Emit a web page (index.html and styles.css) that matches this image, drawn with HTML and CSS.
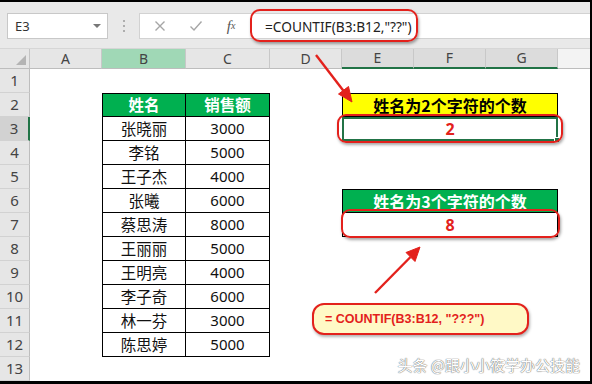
FILE: index.html
```html
<!DOCTYPE html>
<html lang="zh">
<head>
<meta charset="utf-8">
<title>COUNTIF</title>
<link rel="stylesheet" href="styles.css">
</head>
<body>
<div class="frame">
  <div class="toolbar">
    <div class="namebox"><span class="ref">E3</span><span class="caret"></span></div>
    <div class="grip">
      <svg width="4" height="14" viewBox="0 0 4 14"><circle cx="2" cy="2" r="1" fill="#9a9a9a"/><circle cx="2" cy="7" r="1" fill="#9a9a9a"/><circle cx="2" cy="12" r="1" fill="#9a9a9a"/></svg>
    </div>
    <div class="fbar">
      <div class="fbtns">
        <span class="fbtn"><svg width="12" height="12" viewBox="0 0 12 12"><path d="M1.5 1.5 L10.5 10.5 M10.5 1.5 L1.5 10.5" stroke="#a6a6a6" stroke-width="1.4" fill="none"/></svg></span>
        <span class="fbtn"><svg width="14" height="12" viewBox="0 0 14 12"><path d="M1.5 6.5 L5 10 L12.5 1.5" stroke="#a6a6a6" stroke-width="1.4" fill="none"/></svg></span>
        <span class="fbtn fx">f<sub>x</sub></span>
      </div>
      <div class="formula">=COUNTIF(B3:B12,"??")</div>
    </div>
  </div>

  <div class="sheet">
    <div class="corner"><span class="tri"></span></div>
    <div class="ch">A</div>
    <div class="ch chb">B</div>
    <div class="ch">C</div>
    <div class="ch">D</div>
    <div class="ch chs">E</div>
    <div class="ch chs">F</div>
    <div class="ch chs">G</div>
    <div class="ch chf"></div>

    <div class="rh">1</div><div class="c"></div><div class="c"></div><div class="c"></div><div class="c"></div><div class="rest"></div>

    <div class="rh">2</div><div class="c"></div>
    <div class="td th tl tt">姓名</div><div class="td th tt">销售额</div>
    <div class="c"></div><div class="box yel">姓名为2个字符的个数</div><div class="c"></div>

    <div class="rh rhs">3</div><div class="c"></div>
    <div class="td tl">张晓丽</div><div class="td num">3000</div>
    <div class="c"></div><div class="box res sel">2<span class="handle"></span></div><div class="c"></div>

    <div class="rh">4</div><div class="c"></div>
    <div class="td tl">李铭</div><div class="td num">5000</div>
    <div class="c"></div><div class="rest"></div>

    <div class="rh">5</div><div class="c"></div>
    <div class="td tl">王子杰</div><div class="td num">4000</div>
    <div class="c"></div><div class="rest"></div>

    <div class="rh">6</div><div class="c"></div>
    <div class="td tl">张曦</div><div class="td num">6000</div>
    <div class="c"></div><div class="box grn">姓名为3个字符的个数</div><div class="c"></div>

    <div class="rh">7</div><div class="c"></div>
    <div class="td tl">蔡思涛</div><div class="td num">8000</div>
    <div class="c"></div><div class="box res notop">8</div><div class="c"></div>

    <div class="rh">8</div><div class="c"></div>
    <div class="td tl">王丽丽</div><div class="td num">5000</div>
    <div class="c"></div><div class="rest"></div>

    <div class="rh">9</div><div class="c"></div>
    <div class="td tl">王明亮</div><div class="td num">4000</div>
    <div class="c"></div><div class="rest"></div>

    <div class="rh">10</div><div class="c"></div>
    <div class="td tl">李子奇</div><div class="td num">6000</div>
    <div class="c"></div><div class="rest"></div>

    <div class="rh">11</div><div class="c"></div>
    <div class="td tl">林一芬</div><div class="td num">3000</div>
    <div class="c"></div><div class="rest"></div>

    <div class="rh">12</div><div class="c"></div>
    <div class="td tl">陈思婷</div><div class="td num">5000</div>
    <div class="c"></div><div class="rest"></div>

    <div class="rh">13</div><div class="all"></div>
  </div>

  <div class="ring ring-formula"></div>
  <div class="ring ring-e3"></div>
  <div class="ring ring-e7"></div>
  <div class="callout">= COUNTIF(B3:B12, "???")</div>

  <svg class="arrows" width="592" height="384" viewBox="0 0 592 384">
    <g fill="#e3211c" stroke="#e3211c">
      <line x1="316" y1="55" x2="344" y2="91.5" stroke-width="2.4"/>
      <polygon points="352,102 348.5,86.5 338.5,94" stroke-width="1"/>
      <line x1="375" y1="293" x2="410.5" y2="257" stroke-width="2.4"/>
      <polygon points="420,247 415,261.5 406,252.5" stroke-width="1"/>
    </g>
  </svg>

  <div class="mark">头条 @跟小小筱学办公技能</div>
</div>
</body>
</html>
```

FILE: styles.css
```css
* { box-sizing: border-box; }
html, body { margin: 0; padding: 0; background: #fff; }
body { font-family: "Noto Sans CJK SC", "Noto Sans", sans-serif; }

.frame {
  position: relative;
  width: 592px;
  height: 384px;
  border-top: 2px solid #000;
  border-right: 2px solid #000;
  border-bottom: 3px solid #000;
  overflow: hidden;
  background: #fff;
}

/* toolbar */
.toolbar {
  height: 47px;
  background: #e9e9e9;
  display: flex;
  align-items: flex-start;
  padding: 11px 0 0 7px;
  border-bottom: 1px solid #d6d6d6;
}
.namebox {
  width: 101px;
  height: 26px;
  background: #fff;
  border: 1px solid #c8c8c8;
  display: flex;
  align-items: center;
  justify-content: space-between;
  padding: 0 6px 0 7px;
}
.ref { font-family: "Noto Sans", sans-serif; font-size: 13px; color: #333; }
.caret {
  width: 0; height: 0;
  border-left: 4px solid transparent;
  border-right: 4px solid transparent;
  border-top: 4px solid #777;
}
.grip {
  width: 31px;
  height: 26px;
  display: flex;
  align-items: center;
  justify-content: center;
}
.grip svg { display: block; }
.fbar {
  flex: 1;
  height: 26px;
  background: #fff;
  border: 1px solid #d2d2d2;
  border-right: 0;
  display: flex;
  align-items: center;
}
.fbtns { display: flex; width: 109px; padding-left: 2px; }
.fbtn { width: 36px; display: flex; justify-content: center; align-items: center; height: 24px; }
.fbtn svg { display: block; }
.fx {
  font-family: "Liberation Serif", serif;
  font-style: italic;
  font-size: 15px;
  color: #555;
  line-height: 1;
}
.fx sub { font-size: 10px; vertical-align: -2px; }
.formula {
  padding-left: 16px;
  font-family: "Noto Sans", sans-serif;
  font-size: 13.7px;
  color: #222;
  white-space: nowrap;
}

/* sheet */
.sheet {
  display: grid;
  grid-template-columns: 30px 72px 84px 84px 72px 72px 72px 72px 1fr;
  grid-template-rows: 20px repeat(13, 24px);
}
.corner {
  background: #e6e6e6;
  border-right: 1px solid #c4c4c4;
  border-bottom: 1px solid #bdbdbd;
  position: relative;
}
.tri {
  position: absolute;
  right: 3px;
  bottom: 3px;
  width: 0; height: 0;
  border-left: 10px solid transparent;
  border-bottom: 10px solid #b4b4b4;
}
.ch {
  background: #e6e6e6;
  border-right: 1px solid #c8c8c8;
  border-bottom: 1px solid #bdbdbd;
  font-family: "Noto Sans", sans-serif;
  font-size: 14px;
  color: #444;
  display: flex;
  align-items: center;
  justify-content: center;
  line-height: 1;
}
.chb { background: #a0d8b6; }
.chs { background: #dcdcdc; border-bottom: 2px solid #217346; }
.chf { background: #f3f3f3; border-right: 0; }

.rh {
  background: #e6e6e6;
  border-right: 1px solid #bdbdbd;
  border-bottom: 1px solid #d2d2d2;
  font-family: "Noto Sans", sans-serif;
  font-size: 15px;
  color: #444;
  display: flex;
  align-items: center;
  justify-content: center;
  line-height: 1;
}
.rhs { background: #d2d2d2; border-right: 2px solid #217346; }

.rest { grid-column: span 4; }
.all { grid-column: span 8; }

.td {
  border-right: 1px solid #000;
  border-bottom: 1px solid #000;
  display: flex;
  align-items: center;
  justify-content: center;
  font-size: 15.5px;
  color: #111;
  line-height: 1;
}
.tl { border-left: 1px solid #000; }
.tt { border-top: 1px solid #000; }
.th { background: #00b050; color: #fff; font-weight: bold; }
.num { font-family: "Noto Sans", sans-serif; font-size: 15px; }

.box {
  grid-column: span 3;
  border: 1px solid #000;
  display: flex;
  align-items: center;
  justify-content: center;
  font-size: 16px;
  font-weight: bold;
  line-height: 1;
  position: relative;
}
.yel { background: #ffff00; color: #000; }
.grn { background: #00b050; color: #fff; }
.res { color: #e3211c; font-family: "Noto Sans", sans-serif; font-size: 16px; border-top: 0; }
.sel { border: 2px solid #217346; }
.handle {
  position: absolute;
  right: -4px;
  bottom: -4px;
  width: 6px;
  height: 6px;
  background: #217346;
  border: 1px solid #fff;
}

/* annotations */
.ring {
  position: absolute;
  border: 2px solid #e3211c;
  border-radius: 10px;
  box-shadow: 1px 2px 3px rgba(0,0,0,0.35);
}
.ring-formula { left: 250px; top: 7px; width: 168px; height: 33px; }
.ring-e3 { left: 337px; top: 112px; width: 226px; height: 29px; border-radius: 9px; }
.ring-e7 { left: 341px; top: 207px; width: 219px; height: 29px; border-radius: 9px; }
.callout {
  position: absolute;
  left: 312px;
  top: 301px;
  width: 217px;
  height: 32px;
  border: 2px solid #e3211c;
  border-radius: 12px;
  background: #fff9c6;
  box-shadow: 1px 2px 3px rgba(0,0,0,0.3);
  color: #e3211c;
  font-family: "Liberation Sans", sans-serif;
  font-weight: bold;
  font-size: 12.5px;
  display: flex;
  align-items: center;
  padding-left: 11px;
}
.arrows { position: absolute; left: 0; top: -2px; }
.mark {
  position: absolute;
  right: 10px;
  top: 352px;
  font-size: 15px;
  color: #fff;
  text-shadow: 0 0 1px #666, 0 0 1px #666;
  white-space: nowrap;
}
```
